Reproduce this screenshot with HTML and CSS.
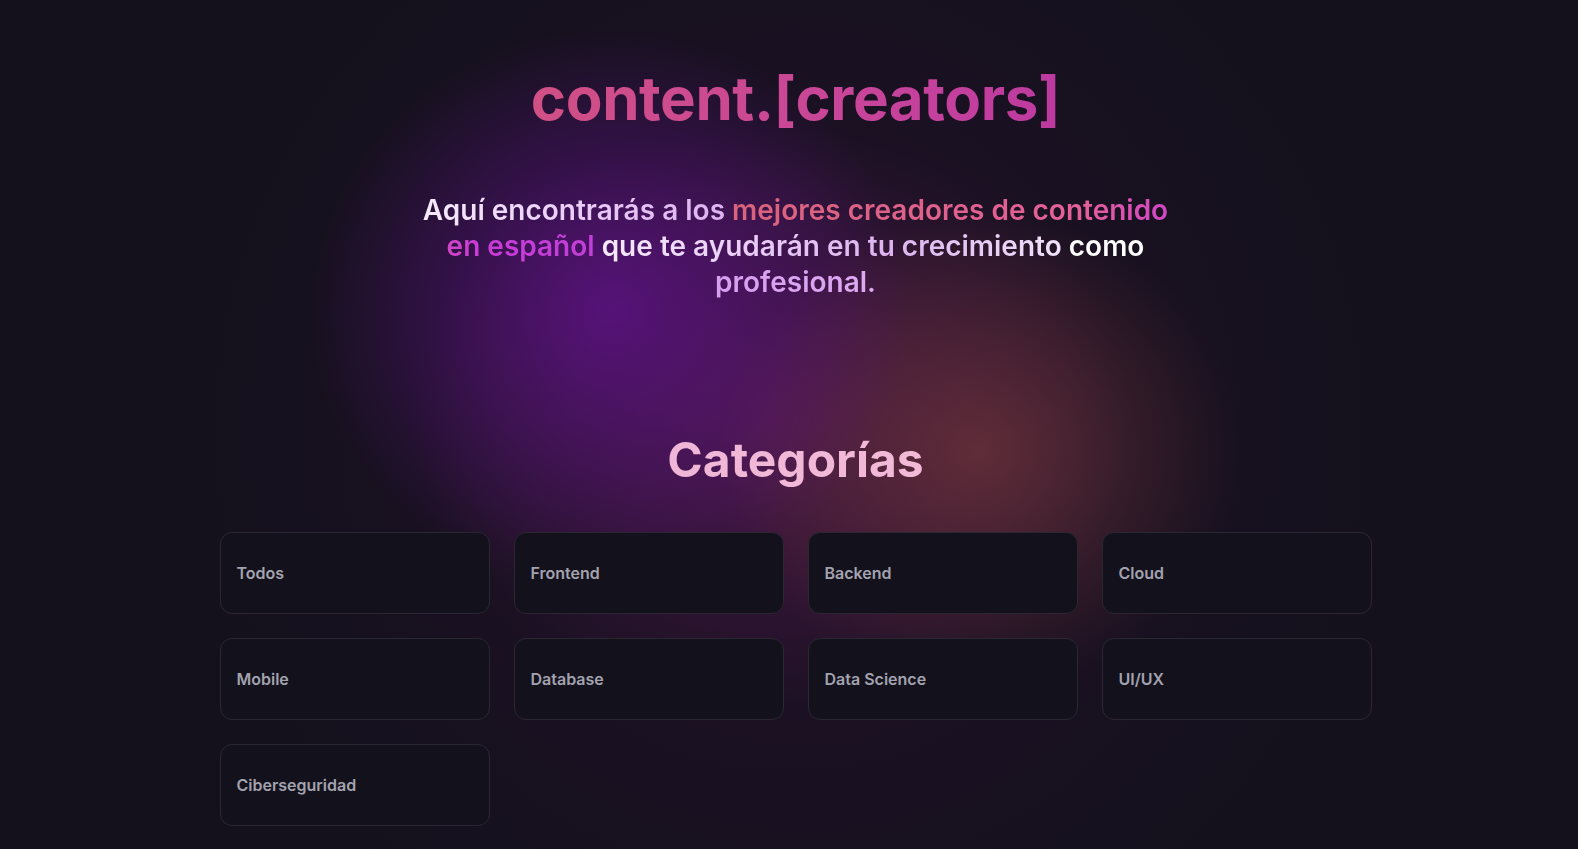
FILE: index.html
```html
<!DOCTYPE html>
<html lang="es">

<head>
    <meta charset="UTF-8">
    <meta name="viewport" content="width=device-width, initial-scale=1.0">
    <title>content.[creators]</title>
    <link rel="stylesheet" href="styles.css">
</head>

<body>
    <main class="container">
        <header class="hero">
            <h1 class="logo">content.[creators]</h1>
            <h2 class="lead"><span class="lead-soft">Aquí encontrarás a los </span><span class="lead-hot">mejores creadores de contenido en español</span><span class="lead-soft"> que te ayudarán en tu </span><span class="lead-light">crecimiento </span><span class="lead-white">como </span><span class="lead-end">profesional.</span></h2>
        </header>

        <section class="categories">
            <h2 class="categories-title">Categorías</h2>
            <div class="grid">
                <a class="card" href="#">Todos</a>
                <a class="card" href="#">Frontend</a>
                <a class="card" href="#">Backend</a>
                <a class="card" href="#">Cloud</a>
                <a class="card" href="#">Mobile</a>
                <a class="card" href="#">Database</a>
                <a class="card" href="#">Data Science</a>
                <a class="card" href="#">UI/UX</a>
                <a class="card" href="#">Ciberseguridad</a>
            </div>
        </section>
    </main>
</body>

</html>
```

FILE: styles.css
```css
html,
body {
    margin: 0;
    height: 100%;
}

body {
    box-sizing: border-box;
    padding-left: 13px;
    font-family: Inter, 'Noto Sans', sans-serif;
    color: #fff;
    background-color: #14111c;
    background-image:
        radial-gradient(ellipse 300px 280px at 610px 310px, rgba(92, 18, 132, 0.85), rgba(92, 18, 132, 0)),
        radial-gradient(ellipse 260px 240px at 980px 450px, rgba(112, 52, 58, 0.75), rgba(112, 52, 58, 0)),
        radial-gradient(ellipse 360px 300px at 770px 420px, rgba(100, 30, 90, 0.6), rgba(100, 30, 90, 0)),
        radial-gradient(circle 600px at 790px 430px, rgba(34, 16, 42, 0.9), rgba(34, 16, 42, 0));
    background-repeat: no-repeat;
    overflow: hidden;
}

.container {
    max-width: 1152px;
    margin: 0 auto;
}

.hero {
    text-align: center;
    padding-top: 61px;
}

.logo {
    margin: 0;
    font-size: 60px;
    line-height: 74px;
    font-weight: 700;
    letter-spacing: -0.4px;
    background: linear-gradient(90deg, #d95a70, #c8459a 55%, #ac28aa);
    -webkit-background-clip: text;
    background-clip: text;
    color: transparent;
}

.lead {
    max-width: 768px;
    margin: 57px auto 0;
    font-size: 28px;
    line-height: 36px;
    font-weight: 600;
}

.lead span {
    -webkit-background-clip: text;
    background-clip: text;
    color: transparent;
}

.lead-soft {
    background-image: linear-gradient(90deg, #f6eafd, #dcb0f0);
}

.lead-hot {
    background-image: linear-gradient(90deg, #d9637c, #e4609a 60%, #c93cd6 80%, #c13fd8);
}

.lead-light {
    background-image: linear-gradient(90deg, #ddb8f0, #f2e4fa);
}

.lead-white {
    background-image: linear-gradient(90deg, #fff, #fff);
}

.lead-end {
    background-image: linear-gradient(90deg, #d79ff0, #dea8f2);
}

.categories {
    padding-top: 132px;
}

.categories-title {
    margin: 0 0 44px;
    text-align: center;
    font-size: 48px;
    line-height: 56px;
    font-weight: 700;
    background: linear-gradient(90deg, #eeaed6, #f4c2d8);
    -webkit-background-clip: text;
    background-clip: text;
    color: transparent;
}

.grid {
    display: grid;
    grid-template-columns: repeat(4, 1fr);
    gap: 24px;
}

.card {
    display: flex;
    align-items: center;
    height: 82px;
    box-sizing: border-box;
    padding: 0 16px;
    border: 1px solid #2a2733;
    border-radius: 12px;
    background: #13111b;
    color: #a3a3b0;
    font-size: 16px;
    font-weight: 600;
    text-decoration: none;
}
```
